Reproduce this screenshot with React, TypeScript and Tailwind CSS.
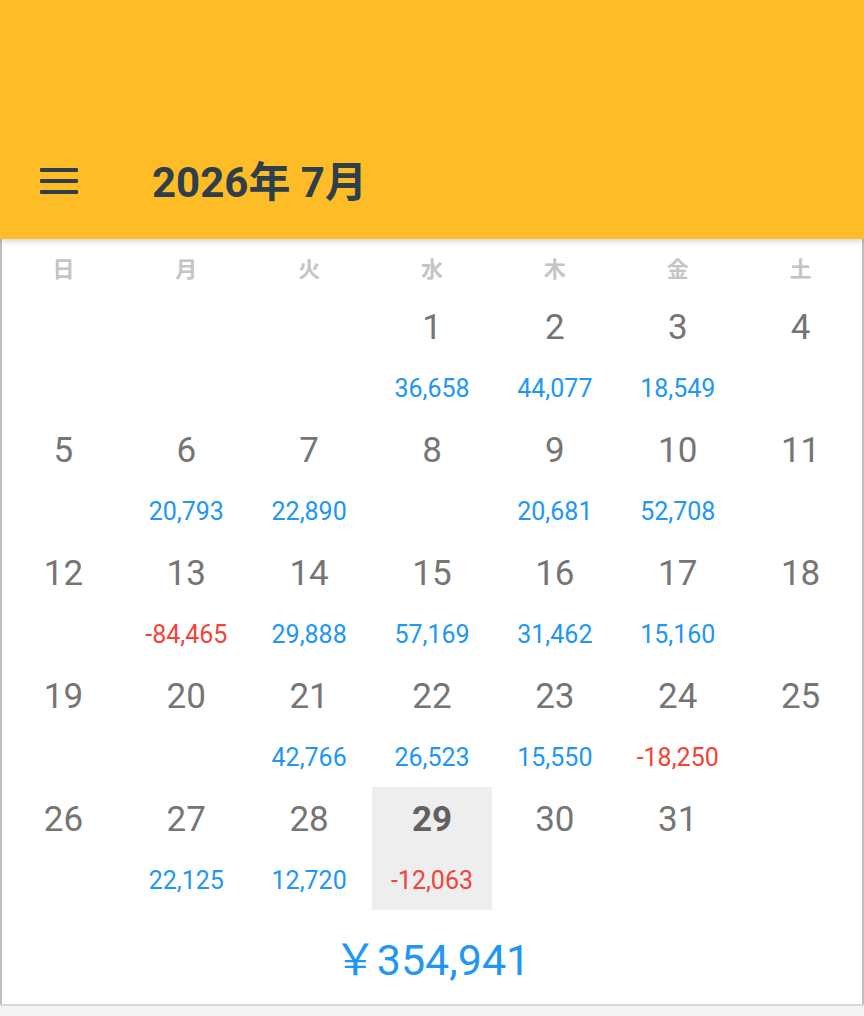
import React from 'react';

type Day = { day: number; amount?: number };

const weekdays = ['日', '月', '火', '水', '木', '金', '土'];

// July 2026 starts on a Wednesday
const days: (Day | null)[] = [
  null, null, null,
  { day: 1, amount: 36658 }, { day: 2, amount: 44077 }, { day: 3, amount: 18549 }, { day: 4 },
  { day: 5 }, { day: 6, amount: 20793 }, { day: 7, amount: 22890 }, { day: 8 },
  { day: 9, amount: 20681 }, { day: 10, amount: 52708 }, { day: 11 },
  { day: 12 }, { day: 13, amount: -84465 }, { day: 14, amount: 29888 }, { day: 15, amount: 57169 },
  { day: 16, amount: 31462 }, { day: 17, amount: 15160 }, { day: 18 },
  { day: 19 }, { day: 20 }, { day: 21, amount: 42766 }, { day: 22, amount: 26523 },
  { day: 23, amount: 15550 }, { day: 24, amount: -18250 }, { day: 25 },
  { day: 26 }, { day: 27, amount: 22125 }, { day: 28, amount: 12720 }, { day: 29, amount: -12063 },
  { day: 30 }, { day: 31 }, null,
];

const today = 29;

const fmt = (n: number) => n.toLocaleString('en-US');

function DayCell({ item }: { item: Day | null }) {
  if (!item) return <div className="h-[123px]" />;
  const isToday = item.day === today;
  return (
    <div className={`h-[123px] flex flex-col items-center ${isToday ? 'bg-[#eeeeee] mx-[1px]' : ''}`}>
      <span
        className={`mt-[13px] text-[35px] leading-[40px] ${isToday ? 'font-bold text-[#616161]' : 'text-[#757575]'}`}
      >
        {item.day}
      </span>
      {item.amount !== undefined && (
        <span
          className={`mt-[26px] text-[25px] leading-[30px] ${item.amount < 0 ? 'text-[#f44336]' : 'text-[#2196f3]'}`}
        >
          {fmt(item.amount)}
        </span>
      )}
    </div>
  );
}

export default function App() {
  const total = days.reduce((sum, d) => sum + (d?.amount ?? 0), 0);

  return (
    <div
      className="w-[864px] h-[1016px] flex flex-col bg-[#f5f5f5] overflow-hidden"
      style={{ fontFamily: 'Roboto, "Noto Sans CJK JP", sans-serif' }}
    >
      {/* App bar */}
      <header className="h-[239px] bg-[#febd26] flex flex-col justify-end shadow-[0_2px_6px_rgba(0,0,0,0.18)] relative z-10">
        <div className="h-[112px] flex items-center">
          <button className="ml-[40px] mb-[4px] w-[38px] h-[28px] flex flex-col justify-between py-[1px]">
            <span className="block h-[4px] w-full bg-[#2f3e4b] rounded-[1px]" />
            <span className="block h-[4px] w-full bg-[#2f3e4b] rounded-[1px]" />
            <span className="block h-[4px] w-full bg-[#2f3e4b] rounded-[1px]" />
          </button>
          <h1 className="ml-[74px] text-[42px] leading-[48px] font-bold text-[#2f3e4b]">
            2026年 7月
          </h1>
        </div>
      </header>

      {/* Calendar */}
      <main className="bg-white border-x-2 border-[#bdbdbd] h-[765px] flex flex-col">
        <div className="grid grid-cols-7 h-[56px]">
          {weekdays.map((w) => (
            <div key={w} className="flex justify-center pt-[18px] text-[22px] leading-[26px] font-bold text-[#c4c4c4]">
              {w}
            </div>
          ))}
        </div>
        <div className="grid grid-cols-7">
          {days.map((d, i) => (
            <DayCell key={i} item={d} />
          ))}
        </div>
        <div className="flex justify-center mt-[26px]">
          <span className="text-[43px] leading-[48px] text-[#2196f3]">￥{fmt(total)}</span>
        </div>
      </main>
      <div className="h-[2px] bg-[#d8d8d8]" />
    </div>
  );
}
